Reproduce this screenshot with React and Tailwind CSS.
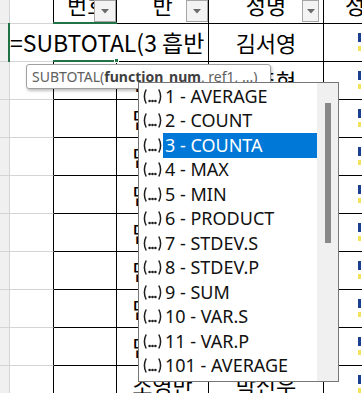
import React from "react";

const KR = { fontFamily: '"Noto Sans CJK KR", "Noto Sans", sans-serif' };

const items = [
  "1 - AVERAGE",
  "2 - COUNT",
  "3 - COUNTA",
  "4 - MAX",
  "5 - MIN",
  "6 - PRODUCT",
  "7 - STDEV.S",
  "8 - STDEV.P",
  "9 - SUM",
  "10 - VAR.S",
  "11 - VAR.P",
  "101 - AVERAGE",
];

const rows = [
  { ban: "", name: "김서영" },
  { ban: "담임반", name: "이준혁" },
  { ban: "담임반", name: "" },
  { ban: "담임반", name: "" },
  { ban: "담임반", name: "" },
  { ban: "담임반", name: "" },
  { ban: "담임반", name: "" },
  { ban: "담임반", name: "" },
  { ban: "담임반", name: "" },
  { ban: "소영반", name: "박신우" },
];

function Arrow() {
  return (
    <svg width="8" height="5" viewBox="0 0 8 5">
      <path d="M0 0 L8 0 L4 4.5 Z" fill="#6b6b6b" />
    </svg>
  );
}

function FilterButton() {
  return (
    <div className="absolute right-0 bottom-[1px] w-[22px] h-[22px] border border-[#a6a6a6] bg-[#f3f3f3] flex items-center justify-center">
      <Arrow />
    </div>
  );
}

function HeaderRow() {
  return (
    <div className="flex h-[39px] -mt-[15px] shrink-0" style={KR}>
      <div className="w-[10px] shrink-0 bg-[#f0f0f0] border-r border-b border-[#d4d4d4]" />
      <div className="w-[44px] shrink-0 border-r border-r-black border-b border-b-[#d4d4d4]" />
      <div className="relative w-[63px] shrink-0 border-r border-b border-black flex items-center pl-[13px] text-[22px] text-black">
        번호
        <FilterButton />
      </div>
      <div className="relative w-[92px] shrink-0 border-r border-b border-black flex items-center justify-center text-[22px] text-black">
        반
        <FilterButton />
      </div>
      <div className="relative w-[115px] shrink-0 border-r border-b border-black flex items-center justify-center text-[22px] text-black">
        성명
        <div className="absolute right-[4px] bottom-[1px] w-[17px] h-[22px] border border-[#a6a6a6] bg-[#f3f3f3] flex items-center justify-center">
          <Arrow />
        </div>
      </div>
      <div className="w-[84px] shrink-0 border-b border-black flex items-center pl-[21px] text-[22px] text-black">
        성별
      </div>
    </div>
  );
}

function BodyRow({ ban, name }) {
  return (
    <div className="flex h-[38px] shrink-0" style={KR}>
      <div className="w-[10px] shrink-0 bg-[#f0f0f0] border-r border-b border-[#d4d4d4]" />
      <div className="w-[44px] shrink-0 border-r border-r-black border-b border-b-[#d4d4d4]" />
      <div className="w-[63px] shrink-0 border-r border-b border-black" />
      <div className="w-[92px] shrink-0 border-r border-b border-black flex items-center justify-center text-[22px] text-black">
        {ban}
      </div>
      <div className="w-[115px] shrink-0 border-r border-b border-black flex items-center justify-center text-[22px] text-black">
        {name}
      </div>
      <div className="w-[84px] shrink-0 border-b border-black flex flex-col pl-[34px] pt-[9px]">
        <div className="w-[3px] h-[9px] bg-[#1b3f8f]" />
        <div className="w-[3px] h-[5px] bg-[#f2e35a] mt-[4px]" />
      </div>
    </div>
  );
}

function EllipsisIcon() {
  return (
    <svg width="21" height="17" viewBox="0 0 21 17" className="shrink-0">
      <path d="M4.2 1.5 Q0.6 8.5 4.2 15.5" stroke="#1e1e1e" strokeWidth="1.5" fill="none" />
      <circle cx="7.6" cy="13" r="1.3" fill="#1e1e1e" />
      <circle cx="10.5" cy="13" r="1.3" fill="#1e1e1e" />
      <circle cx="13.4" cy="13" r="1.3" fill="#1e1e1e" />
      <path d="M16.8 1.5 Q20.4 8.5 16.8 15.5" stroke="#1e1e1e" strokeWidth="1.5" fill="none" />
    </svg>
  );
}

export default function App() {
  return (
    <div className="relative w-[362px] h-[393px] overflow-hidden bg-white">
      <div className="flex flex-col">
        <HeaderRow />
        {rows.map((r, i) => (
          <BodyRow key={i} ban={r.ban} name={r.name} />
        ))}
      </div>

      {/* cell edit box */}
      <div
        className="absolute left-[10px] top-[24px] w-[188px] h-[37px] bg-white flex items-center text-[23px] text-black whitespace-nowrap"
        style={KR}
      >
        =SUBTOTAL(3 흡반
      </div>
      {/* active cell border */}
      <div className="absolute left-[8px] top-[23px] w-[2px] h-[39px] bg-[#217346]" />
      <div className="absolute left-[53px] top-[22px] w-[64px] h-[2px] bg-[#217346]" />
      <div className="absolute left-[53px] top-[60px] w-[64px] h-[2px] bg-[#217346]" />
      <div className="absolute left-[114px] top-[58px] w-[5px] h-[5px] bg-[#217346] border border-white" />

      {/* function tooltip */}
      <div
        className="absolute left-[26px] top-[64px] w-[245px] h-[25px] bg-white border border-[#a0a0a0] rounded-[3px] shadow-[1px_2px_3px_rgba(0,0,0,0.25)] flex items-center pl-[5px] text-[14px] text-[#606060] whitespace-nowrap"
        style={{ fontFamily: '"Noto Sans", sans-serif' }}
      >
        SUBTOTAL(<span className="font-bold text-[#404040]">function_num</span>, ref1, ...)
      </div>

      {/* autocomplete list */}
      <div
        className="absolute left-[138px] top-[82px] w-[201px] h-[300px] bg-white border border-[#767676] flex"
        style={{ fontFamily: '"Noto Sans", sans-serif' }}
      >
        <div className="flex-1 flex flex-col pt-[1px]">
          {items.map((t) => {
            const sel = t === "3 - COUNTA";
            return (
              <div key={t} className="flex items-center h-[24.5px] pl-[3px]">
                <EllipsisIcon />
                <div
                  className={
                    sel
                      ? "flex-1 h-full flex items-center pl-[2px] bg-[#0078d7] text-white text-[18px]"
                      : "flex-1 h-full flex items-center pl-[2px] text-[#111] text-[18px]"
                  }
                >
                  {t}
                </div>
              </div>
            );
          })}
        </div>
        <div className="w-[21px] bg-[#f0f0f0] flex justify-center pt-[20px]">
          <div className="w-[6px] h-[140px] bg-[#888888]" />
        </div>
      </div>
    </div>
  );
}
